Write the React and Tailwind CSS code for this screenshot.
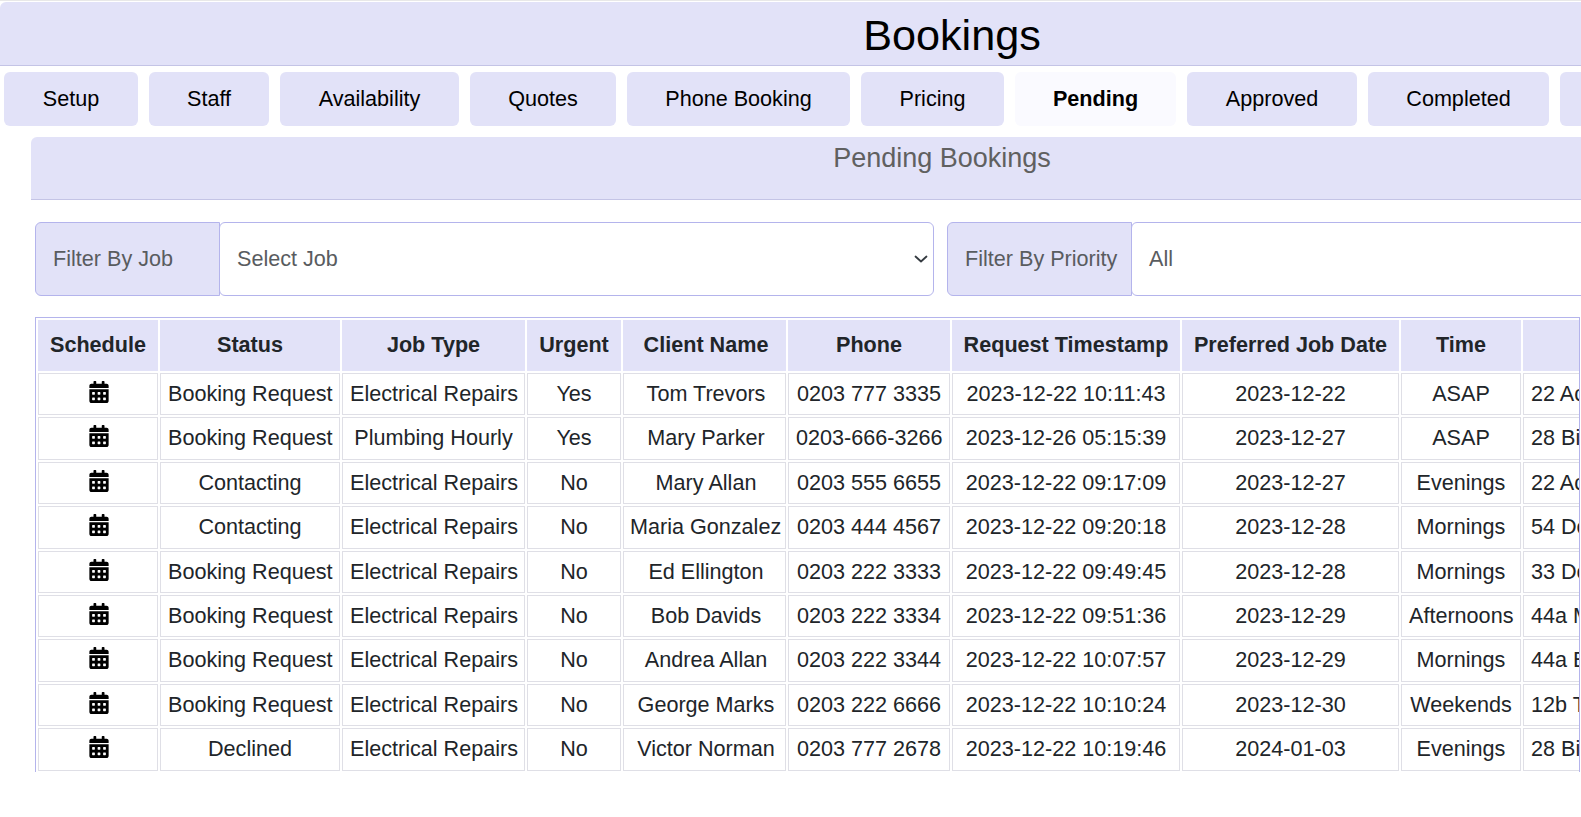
import React from "react";
import { FaCalendarAlt } from "react-icons/fa";

const tabs = [
  ["Setup", "w-[134px]"],
  ["Staff", "w-[120px]"],
  ["Availability", "w-[179px]"],
  ["Quotes", "w-[146px]"],
  ["Phone Booking", "w-[223px]"],
  ["Pricing", "w-[143px]"],
  ["Pending", "w-[161px]"],
  ["Approved", "w-[170px]"],
  ["Completed", "w-[181px]"],
  ["Invoiced", "w-[170px]"],
];
const heads = [
  ["Schedule", "w-[120px]"],
  ["Status", "w-[180px]"],
  ["Job Type", "w-[183px]"],
  ["Urgent", "w-[94px]"],
  ["Client Name", "w-[163px]"],
  ["Phone", "w-[162px]"],
  ["Request Timestamp", "w-[228px]"],
  ["Preferred Job Date", "w-[217px]"],
  ["Time", "w-[120px]"],
  ["Address", "w-[340px]"],
];
const rows = [
  ["Booking Request", "Electrical Repairs", "Yes", "Tom Trevors", "0203 777 3335", "2023-12-22 10:11:43", "2023-12-22", "ASAP", "22 Acacia Avenue, London"],
  ["Booking Request", "Plumbing Hourly", "Yes", "Mary Parker", "0203-666-3266", "2023-12-26 05:15:39", "2023-12-27", "ASAP", "28 Birch Street, London"],
  ["Contacting", "Electrical Repairs", "No", "Mary Allan", "0203 555 6655", "2023-12-22 09:17:09", "2023-12-27", "Evenings", "22 Acacia Avenue, London"],
  ["Contacting", "Electrical Repairs", "No", "Maria Gonzalez", "0203 444 4567", "2023-12-22 09:20:18", "2023-12-28", "Mornings", "54 Dover Street, London"],
  ["Booking Request", "Electrical Repairs", "No", "Ed Ellington", "0203 222 3333", "2023-12-22 09:49:45", "2023-12-28", "Mornings", "33 Dean Street, London"],
  ["Booking Request", "Electrical Repairs", "No", "Bob Davids", "0203 222 3334", "2023-12-22 09:51:36", "2023-12-29", "Afternoons", "44a Mill Lane, London"],
  ["Booking Request", "Electrical Repairs", "No", "Andrea Allan", "0203 222 3344", "2023-12-22 10:07:57", "2023-12-29", "Mornings", "44a Elm Road, London"],
  ["Booking Request", "Electrical Repairs", "No", "George Marks", "0203 222 6666", "2023-12-22 10:10:24", "2023-12-30", "Weekends", "12b The Crescent, London"],
  ["Declined", "Electrical Repairs", "No", "Victor Norman", "0203 777 2678", "2023-12-22 10:19:46", "2024-01-03", "Evenings", "28 Birch Street, London"],
];

function Filter({ label, value, selectWidth, labelWidth }) {
  return (
    <div className="flex h-[74px] text-[#595c5f]">
      <div className={`flex items-center ${labelWidth} pl-[17px] bg-[#e2e2f8] border border-[#b4b4ec] rounded-l-[6px] whitespace-nowrap`}>{label}</div>
      <div className={`relative flex items-center ${selectWidth} -ml-px pl-[17px] bg-white border border-[#b4b4ec] rounded-[6px]`}>
        {value}
        <svg className="absolute right-[4px] top-[28px]" width="16" height="16" viewBox="0 0 16 16" fill="none" stroke="#343a40" strokeWidth="1.8" strokeLinecap="round" strokeLinejoin="round">
          <path d="m2.5 5.5 5.5 5 5.5-5" />
        </svg>
      </div>
    </div>
  );
}

function cellPadding(c, j) {
  if (c === "Maria Gonzalez") return "pl-[6px] pr-[6px]";
  if (j === 3) return "pl-[9px] pr-[6px]";
  return "px-[7px]";
}

export default function App() {
  return (
    <div className="w-[1581px] h-[817px] overflow-hidden bg-white font-['Liberation_Sans',Arial,sans-serif] text-[21.6px] leading-[1.5] text-[#212529]">
      <div className="w-[1904px]">
        <div className="pt-px border-t border-[#e8e8e8]">
          <div className="h-[64px] pt-[4px] flex items-center justify-center bg-[#e2e2f8] border-b border-[#c4c4e6] rounded-t-[6px] text-[43.2px] text-black">
            Bookings
          </div>
        </div>
        <div className="flex gap-[11px] pl-[4px] pt-[6px]">
          {tabs.map(([t, w]) => (
            <div key={t} className={`${w} shrink-0 h-[54px] flex items-center justify-center rounded-[6px] text-black ${t === "Pending" ? "bg-[#fafaff] font-bold" : "bg-[#e2e2f8]"}`}>
              {t}
            </div>
          ))}
        </div>
        <div className="ml-[31px] w-[1822px] mt-[11px] h-[63px] bg-[#e2e2f8] border-b border-[#c4c4e6] rounded-t-[6px] text-center text-[27px] leading-[43px] text-[#606060]">
          Pending Bookings
        </div>
        <div className="flex gap-[13px] ml-[35px] mt-[22px]">
          <Filter label="Filter By Job" value="Select Job" labelWidth="w-[185px]" selectWidth="w-[715px]" />
          <Filter label="Filter By Priority" value="All" labelWidth="w-[185px]" selectWidth="w-[720px]" />
        </div>
        <div className="ml-[35px] mt-[21px] w-[1545px] h-[455px] overflow-hidden border-x border-t border-[#b4b4ec]">
          <table className="table-fixed w-[1829px] border-separate border-spacing-[2px] text-center">
            <colgroup>
              {heads.map(([h, w]) => (
                <col key={h} className={w} />
              ))}
            </colgroup>
            <thead>
              <tr>
                {heads.map(([h], j) => (
                  <th key={h} className={`${j === 4 ? "pl-[10px] pr-[7px]" : "px-[8px]"} py-[8.3px] bg-[#e2e2f8] border border-[#e2e2f8] font-bold whitespace-nowrap`}>{h}</th>
                ))}
              </tr>
            </thead>
            <tbody>
              {rows.map((r, i) => (
                <tr key={i}>
                  <td className="px-[7px] py-[4px] border border-[#dfdfe6] align-top">
                    <FaCalendarAlt className="inline-block align-top mt-[3px] ml-[1px] text-black text-[22px]" />
                  </td>
                  {r.map((c, j) => (
                    <td key={j} className={`${cellPadding(c, j)} py-[4px] border border-[#dfdfe6] whitespace-nowrap ${j === 8 ? "text-left" : ""}`}>{c}</td>
                  ))}
                </tr>
              ))}
            </tbody>
          </table>
        </div>
      </div>
    </div>
  );
}
